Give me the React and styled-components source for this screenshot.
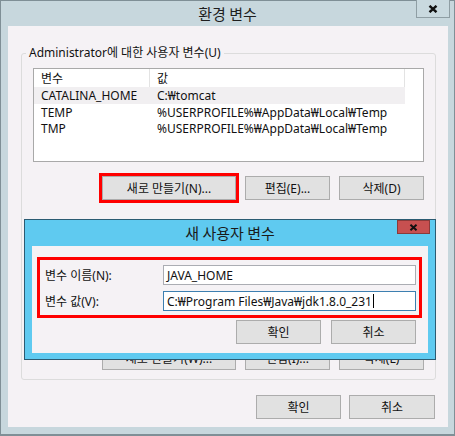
import React from "react";
import styled, { createGlobalStyle } from "styled-components";

const Global = createGlobalStyle`
  html, body { margin: 0; padding: 0; background: #ffffff; }
  body {
    font-family: "Noto Sans", "Noto Sans CJK KR", sans-serif;
    font-size: 12px;
    color: #000;
  }
  * { box-sizing: border-box; }
`;

const Window = styled.div`
  position: relative;
  width: 455px;
  height: 436px;
  background: #c7d7dd;
  border: 1px solid #7f8f96;
  border-bottom-width: 2px;
  display: flex;
  flex-direction: column;
`;

const TitleBar = styled.div`
  display: grid;
  grid-template-columns: 1fr auto 1fr;
  height: 25px;
  align-items: start;
`;

const Title = styled.div`
  grid-column: 2;
  font-family: "Noto Sans CJK KR", sans-serif;
  font-size: 15px;
  line-height: 25px;
  color: #1e1e1e;
`;

const CloseBox = styled.div`
  grid-column: 3;
  justify-self: end;
  width: ${(p) => p.$w}px;
  height: ${(p) => p.$h}px;
  margin-top: ${(p) => p.$mt || 0}px;
  margin-right: ${(p) => p.$mr}px;
  border: 1px solid ${(p) => (p.$red ? "#8a3a3a" : "#8f9ea4")};
  border-top: ${(p) => (p.$red ? "1px solid #8a3a3a" : "none")};
  background: ${(p) => (p.$red ? "#c75050" : "#c9d9df")};
  display: flex;
  align-items: center;
  justify-content: center;
`;

const Content = styled.div`
  flex: 1;
  margin: 0 6px 7px 7px;
  background: #f5f2f5;
  display: flex;
  flex-direction: column;
`;

const Group = styled.div`
  margin: 27px 12px 0 13px;
  border: 1px solid #dcdcdc;
  border-radius: 3px;
  padding: 0 11px 9px;
  display: flex;
  flex-direction: column;
`;

const Legend = styled.span`
  align-self: flex-start;
  margin: -9px 0 7px -7px;
  padding: 0 3px;
  line-height: 16px;
  background: #f5f2f5;
  color: #111;
`;

const List = styled.div`
  height: 94px;
  border: 1px solid #a9a9a9;
  background: #ffffff;
`;

const Row = styled.div`
  display: grid;
  grid-template-columns: 116px 255px;
  height: ${(p) => (p.$header ? 18 : 16.5)}px;
  align-items: center;
  width: 371px;
  background: ${(p) => (p.$selected ? "#f1eff1" : "transparent")};
`;

const Cell = styled.div`
  padding-left: 7px;
  height: 100%;
  display: flex;
  align-items: center;
  white-space: nowrap;
  color: #111;
  border-right: ${(p) => (p.$header ? "1px solid #e3e3e3" : "none")};
`;

const ButtonRow = styled.div`
  display: flex;
  justify-content: flex-end;
  gap: ${(p) => p.$gap || 9}px;
  margin-top: ${(p) => p.$mt || 0}px;
  padding-right: ${(p) => p.$pr || 0}px;
`;

const Button = styled.div`
  width: ${(p) => p.$w}px;
  height: 24px;
  background: #e1e1e1;
  border: 1px solid #acacac;
  display: flex;
  align-items: center;
  justify-content: center;
  color: #111;
  white-space: nowrap;
  outline: ${(p) => (p.$marked ? "3px solid #ff0000" : "none")};
`;

const Dialog = styled.div`
  position: absolute;
  left: 23px;
  top: 218px;
  width: 412px;
  height: 141px;
  border: 1px solid #2b5b72;
  background: #5fcaf0;
  display: flex;
  flex-direction: column;
`;

const DialogTitleBar = styled(TitleBar)`
  height: 26px;
`;

const DialogTitle = styled(Title)`
  line-height: 26px;
  color: #1a1a1a;
`;

const DialogBody = styled.div`
  flex: 1;
  margin: 0 7px 6px 7px;
  background: #f5f2f5;
  padding: 11px 0 0 5px;
  display: flex;
  flex-direction: column;
`;

const RedBox = styled.div`
  margin-right: 6px;
  border: 3px solid #ff0000;
  padding: 5px 3px 4px 5px;
  display: grid;
  grid-template-columns: 118px 1fr;
  row-gap: 6px;
  align-items: center;
`;

const Label = styled.div`
  color: #111;
  white-space: nowrap;
`;

const Input = styled.div`
  height: 20px;
  border: 1px solid ${(p) => (p.$focused ? "#3d7fb0" : "#abadb3")};
  background: #fff;
  padding-left: 3px;
  display: flex;
  align-items: center;
  white-space: nowrap;
  color: #111;
`;

const Caret = styled.span`
  display: inline-block;
  width: 1px;
  height: 14px;
  background: #000;
  margin-left: 1px;
`;

const XIcon = ({ size = 10, width = 2.4 }) => (
  <svg width={size} height={size - 2} viewBox="0 0 10 8">
    <path d="M1.5 0.8 L8.5 7.2 M8.5 0.8 L1.5 7.2" stroke="#111" strokeWidth={width} strokeLinecap="butt" />
  </svg>
);

const rows = [
  ["CATALINA_HOME", "C:₩tomcat", true],
  ["TEMP", "%USERPROFILE%₩AppData₩Local₩Temp", false],
  ["TMP", "%USERPROFILE%₩AppData₩Local₩Temp", false],
];

export default function App() {
  return (
    <>
      <Global />
      <Window>
        <TitleBar>
          <Title>환경 변수</Title>
          <CloseBox $w={34} $h={18} $mt={-1} $mr={4}>
            <XIcon />
          </CloseBox>
        </TitleBar>
        <Content>
          <Group>
            <Legend>Administrator에 대한 사용자 변수(U)</Legend>
            <List>
              <Row $header>
                <Cell $header>변수</Cell>
                <Cell $header>값</Cell>
              </Row>
              {rows.map(([n, v, sel]) => (
                <Row key={n} $selected={sel}>
                  <Cell>{n}</Cell>
                  <Cell>{v}</Cell>
                </Row>
              ))}
            </List>
            <ButtonRow $mt={14}>
              <Button $w={134} $marked>새로 만들기(N)...</Button>
              <Button $w={85}>편집(E)...</Button>
              <Button $w={85}>삭제(D)</Button>
            </ButtonRow>
            <ButtonRow $mt={146}>
              <Button $w={134}>새로 만들기(W)...</Button>
              <Button $w={85}>편집(I)...</Button>
              <Button $w={85}>삭제(L)</Button>
            </ButtonRow>
          </Group>
          <ButtonRow $mt={15} $pr={13} $gap={8}>
            <Button $w={85}>확인</Button>
            <Button $w={86}>취소</Button>
          </ButtonRow>
        </Content>

        <Dialog>
          <DialogTitleBar>
            <DialogTitle>새 사용자 변수</DialogTitle>
            <CloseBox $w={33} $h={14} $mr={5} $red>
              <XIcon size={9} width={2.2} />
            </CloseBox>
          </DialogTitleBar>
          <DialogBody>
            <RedBox>
              <Label>변수 이름(N):</Label>
              <Input>JAVA_HOME</Input>
              <Label>변수 값(V):</Label>
              <Input $focused>
                C:₩Program Files₩Java₩jdk1.8.0_231
                <Caret />
              </Input>
            </RedBox>
            <ButtonRow $mt={2} $pr={12} $gap={10}>
              <Button $w={85}>확인</Button>
              <Button $w={85}>취소</Button>
            </ButtonRow>
          </DialogBody>
        </Dialog>
      </Window>
    </>
  );
}
